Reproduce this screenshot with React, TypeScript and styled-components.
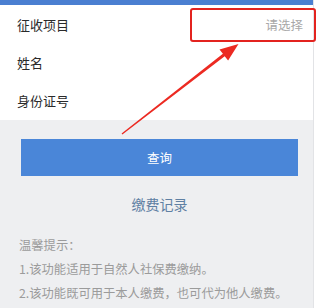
import React from 'react'
import styled, { createGlobalStyle } from 'styled-components'

const GlobalStyle = createGlobalStyle`
  html, body {
    margin: 0;
    padding: 0;
    background: #ffffff;
    font-family: "Noto Sans CJK SC", "Noto Sans", sans-serif;
  }
`

const Screen = styled.div`
  position: relative;
  width: 320px;
  height: 308px;
  overflow: hidden;
  background: #ffffff;
`

const Page = styled.div`
  width: 313px;
  height: 308px;
  display: flex;
  flex-direction: column;
  background: #eeeff1;
  border-right: 1px solid #e2e3e6;
`

const TopBar = styled.div`
  height: 5px;
  background: #4a7fd1;
  flex-shrink: 0;
`

const Form = styled.div`
  background: #ffffff;
  display: flex;
  flex-direction: column;
  padding-bottom: 1px;
`

const Row = styled.div`
  height: 38px;
  display: flex;
  align-items: center;
  justify-content: space-between;
  padding: 0 10px 0 17px;
`

const Label = styled.span`
  font-size: 13px;
  color: #2a2a2a;
`

const Placeholder = styled.span`
  font-size: 12.5px;
  color: #a8a8a8;
`

const Body = styled.div`
  display: flex;
  flex-direction: column;
  padding: 19px 15px 0 21px;
`

const QueryButton = styled.div`
  height: 37px;
  background: #4a86d8;
  display: flex;
  align-items: center;
  justify-content: center;
  color: #ffffff;
  font-size: 12.5px;
`

const RecordLink = styled.div`
  margin-top: 18px;
  text-align: center;
  font-size: 14px;
  color: #5f80a3;
  line-height: 20px;
`

const Tips = styled.div`
  margin-top: 21px;
  margin-left: -2px;
  display: flex;
  flex-direction: column;
  gap: 4px;
`

const TipLine = styled.div`
  font-size: 12.3px;
  line-height: 20px;
  color: #9b9b9b;
  white-space: nowrap;
`

const Highlight = styled.div`
  position: absolute;
  left: 190px;
  top: 8px;
  width: 122px;
  height: 30px;
  border: 2px solid #e3231f;
  border-radius: 3px;
`

const Arrow = styled.svg`
  position: absolute;
  left: 0;
  top: 0;
  pointer-events: none;
`

const tips = [
  '温馨提示：',
  '1.该功能适用于自然人社保费缴纳。',
  '2.该功能既可用于本人缴费，也可代为他人缴费。',
]

export default function App() {
  return (
    <Screen>
      <GlobalStyle />
      <Page>
        <TopBar />
        <Form>
          <Row>
            <Label>征收项目</Label>
            <Placeholder>请选择</Placeholder>
          </Row>
          <Row>
            <Label>姓名</Label>
          </Row>
          <Row>
            <Label>身份证号</Label>
          </Row>
        </Form>
        <Body>
          <QueryButton>查询</QueryButton>
          <RecordLink>缴费记录</RecordLink>
          <Tips>
            {tips.map((t) => (
              <TipLine key={t}>{t}</TipLine>
            ))}
          </Tips>
        </Body>
      </Page>
      <Highlight />
      <Arrow width="320" height="308" viewBox="0 0 320 308">
        <polygon
          points="122.4,134.5 224.7,56.2 228.1,60.5 238.5,44 219.5,49.5 222.9,53.8 121.6,133.5"
          fill="#ec2a22"
        />
      </Arrow>
    </Screen>
  )
}
